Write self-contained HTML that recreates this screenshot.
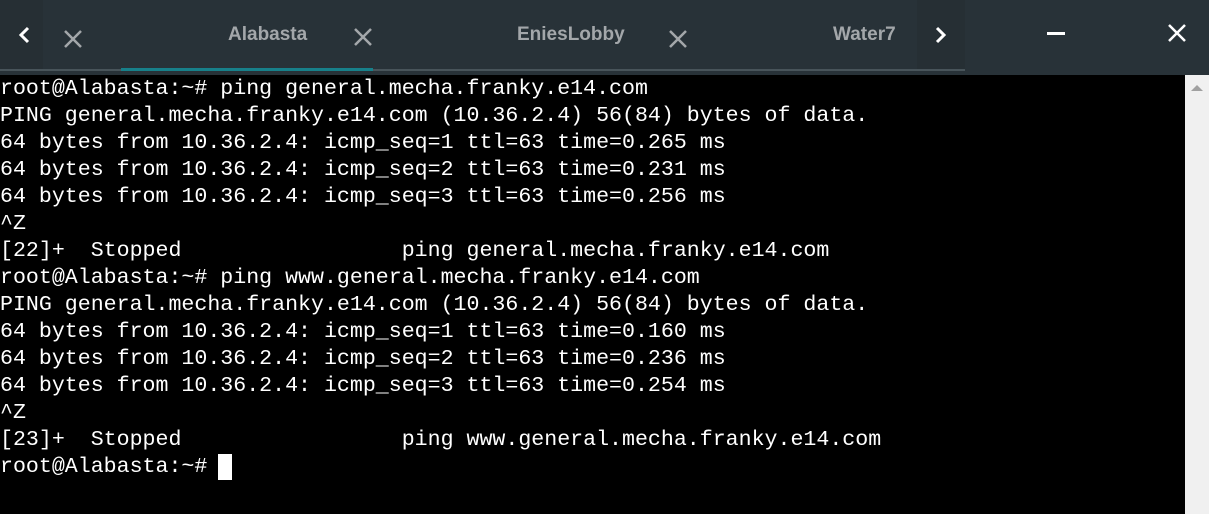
<!DOCTYPE html>
<html><head><style>
body{margin:0;width:1209px;height:514px;overflow:hidden;background:#000;position:relative;font-family:"Liberation Sans",sans-serif}
.hdr{position:absolute;left:0;top:0;width:1209px;height:75px;background:#283238}
.t{position:absolute;color:#a3a7aa;font-weight:bold;font-size:19px;top:24px}
.line{position:absolute;top:69px;height:2px;background:#48545a}
pre{position:absolute;left:0;top:76px;margin:0;color:#fff;font-family:"Liberation Mono",monospace;font-size:21.6px;line-height:27px}
.sb{position:absolute;left:1185px;top:75px;width:24px;height:439px;background:#f0f0f0}
svg{position:absolute}
</style></head><body>
<div class="hdr">
<div style="position:absolute;left:0;top:0;width:43px;height:70px;background:#262f34"></div>
<div style="position:absolute;left:917px;top:0;width:48px;height:70px;background:#262f34"></div>
<svg style="left:15px;top:24px" width="20" height="22"><path d="M13 4 L6 11 L13 18" stroke="#fff" stroke-width="3" fill="none"/></svg>
<svg style="left:62px;top:28px" width="22" height="22"><path d="M3 3 L19 19 M19 3 L3 19" stroke="#a3a7aa" stroke-width="2.5"/></svg>
<div class="t" style="left:228px">Alabasta</div>
<svg style="left:352px;top:26px" width="22" height="22"><path d="M3 3 L19 19 M19 3 L3 19" stroke="#a3a7aa" stroke-width="2.5"/></svg>
<div class="t" style="left:517px">EniesLobby</div>
<svg style="left:667px;top:28px" width="22" height="22"><path d="M3 3 L19 19 M19 3 L3 19" stroke="#a3a7aa" stroke-width="2.5"/></svg>
<div class="t" style="left:833px">Water7</div>
<svg style="left:930px;top:24px" width="20" height="22"><path d="M7 4 L14 11 L7 18" stroke="#fff" stroke-width="3" fill="none"/></svg>
<div style="position:absolute;left:1047px;top:32px;width:18px;height:3px;background:#fff"></div>
<svg style="left:1166px;top:22px" width="22" height="22"><path d="M3 3 L19 19 M19 3 L3 19" stroke="#fff" stroke-width="2.5"/></svg>
<div class="line" style="left:0;width:965px"></div>
<div class="line" style="left:121px;width:252px;background:#17808a;height:3px;top:68px"></div>
</div>
<pre>root@Alabasta:~# ping general.mecha.franky.e14.com
PING general.mecha.franky.e14.com (10.36.2.4) 56(84) bytes of data.
64 bytes from 10.36.2.4: icmp_seq=1 ttl=63 time=0.265 ms
64 bytes from 10.36.2.4: icmp_seq=2 ttl=63 time=0.231 ms
64 bytes from 10.36.2.4: icmp_seq=3 ttl=63 time=0.256 ms
^Z
[22]+  Stopped                 ping general.mecha.franky.e14.com
root@Alabasta:~# ping www.general.mecha.franky.e14.com
PING general.mecha.franky.e14.com (10.36.2.4) 56(84) bytes of data.
64 bytes from 10.36.2.4: icmp_seq=1 ttl=63 time=0.160 ms
64 bytes from 10.36.2.4: icmp_seq=2 ttl=63 time=0.236 ms
64 bytes from 10.36.2.4: icmp_seq=3 ttl=63 time=0.254 ms
^Z
[23]+  Stopped                 ping www.general.mecha.franky.e14.com
root@Alabasta:~# </pre>
<div style="position:absolute;left:218px;top:454px;width:14px;height:26px;background:#fff"></div>
<div class="sb"><svg style="left:6px;top:9px" width="12" height="8"><path d="M0 7 L6 1 L12 7Z" fill="#a0a0a0"/></svg></div>
</body></html>
